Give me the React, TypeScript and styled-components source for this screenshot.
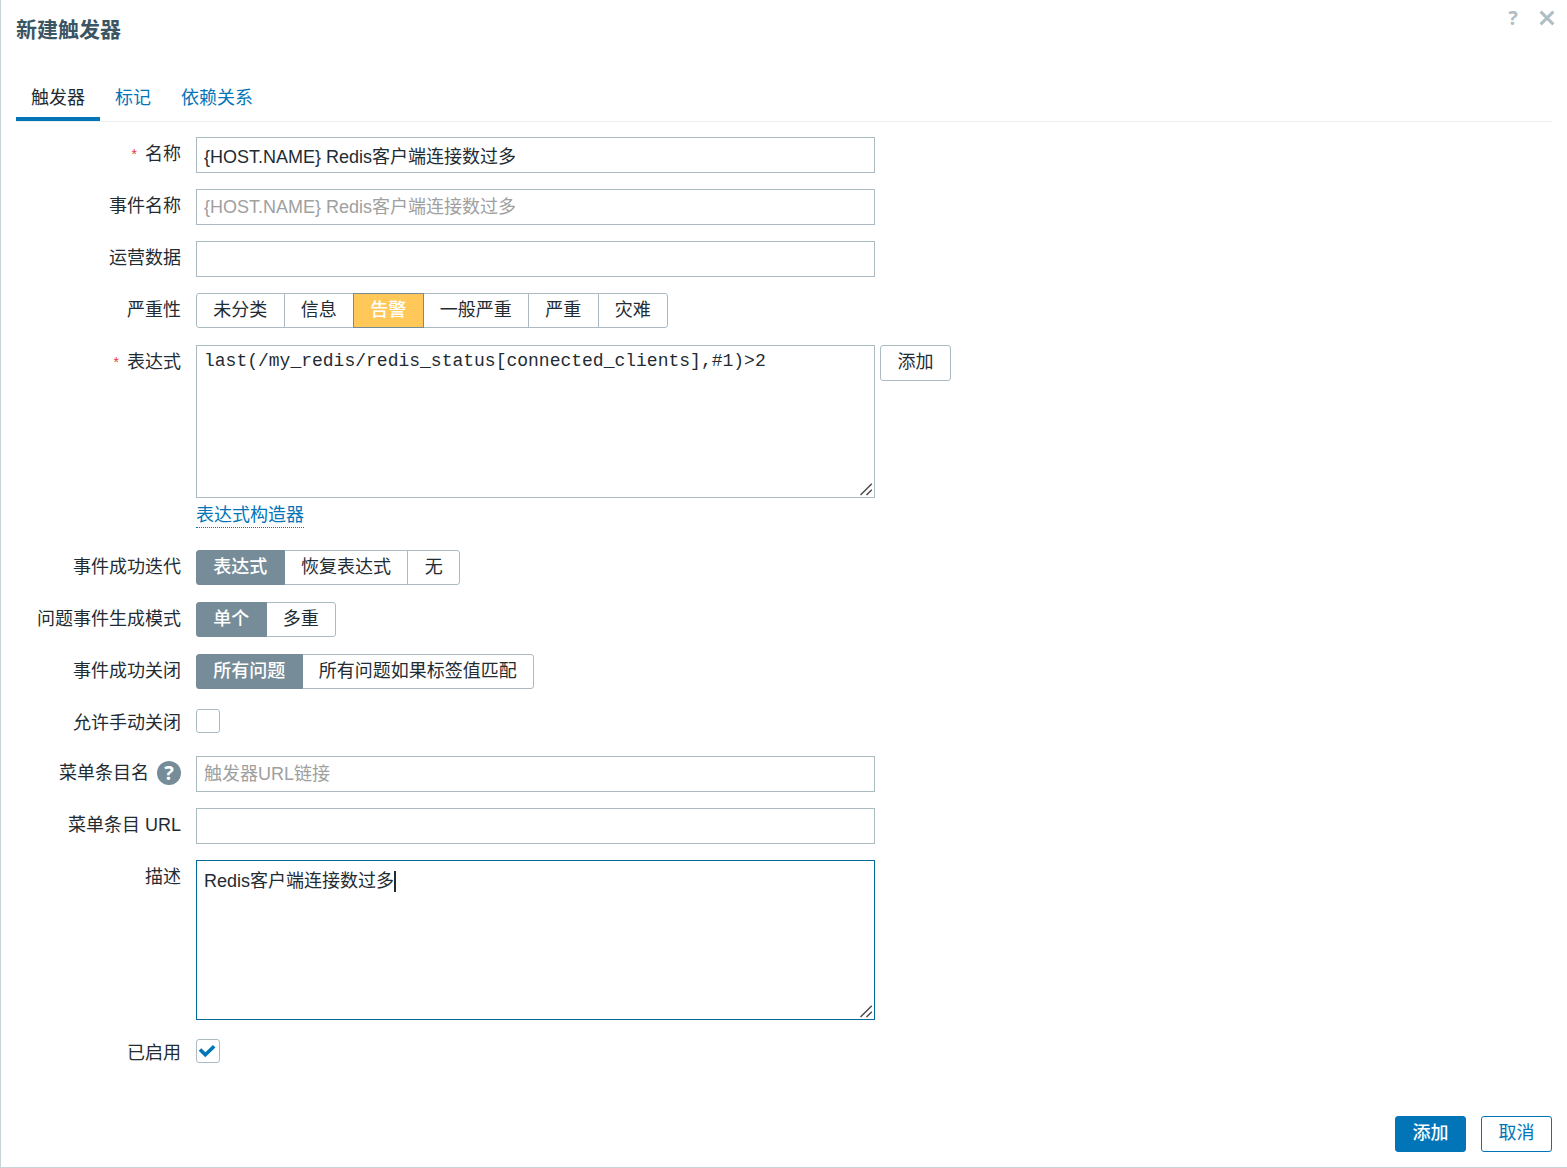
import React, { useLayoutEffect, useRef, useState } from "react";
import styled, { createGlobalStyle } from "styled-components";

const sans = '"Liberation Sans", "Noto Sans CJK SC", sans-serif';
const mono = '"Liberation Mono", "Noto Sans CJK SC", monospace';

const color = {
  text: "#1f2c33",
  heading: "#3c5563",
  link: "#0275b8",
  border: "#acbbc2",
  focus: "#006a9d",
  selected: "#768d99",
  warning: "#ffc859",
  required: "#e33734",
  hint: "#a0a0a0",
};

const GlobalStyle = createGlobalStyle`
  * { box-sizing: border-box; }
  body {
    margin: 0;
    background: #ffffff;
    color: ${color.text};
    font-family: ${sans};
    font-size: 18px;
  }
  button, input, textarea { font-family: inherit; font-size: inherit; color: inherit; margin: 0; }
`;

const Dialog = styled.form`
  display: flex;
  flex-direction: column;
  min-height: 100vh;
  padding: 0 15px 15px;
  border-left: 1px solid #c8d3d7;
  border-bottom: 1px solid #c8d3d7;
`;

const Header = styled.header`
  display: flex;
  justify-content: space-between;
  align-items: flex-start;
  height: 76px;
`;

const Title = styled.h1`
  margin: 14px 0 0;
  font-size: 21px;
  line-height: 32px;
  font-weight: 700;
  color: ${color.heading};
`;

const HeaderTools = styled.div`
  display: flex;
  gap: 12px;
  margin-right: -6px;
  padding-top: 6px;
`;

const IconButton = styled.button`
  display: grid;
  place-items: center;
  width: 22px;
  height: 24px;
  padding: 0;
  border: 0;
  background: none;
  color: #b0bec5;
  font-family: "Noto Sans", sans-serif;
  font-size: 20px;
  line-height: 24px;
  font-weight: 700;
`;

const Tabs = styled.nav`
  display: flex;
  height: 46px;
  border-bottom: 1px solid #ebeef0;
`;

const Tab = styled.a<{ $active?: boolean }>`
  padding: 4px 15px 0;
  line-height: 37px;
  text-decoration: none;
  color: ${(p) => (p.$active ? color.text : color.link)};
  border-bottom: 4px solid ${(p) => (p.$active ? color.link : "transparent")};
`;

const Fields = styled.div`
  display: flex;
  flex-direction: column;
  gap: 16px;
  padding: 15px 0 40px;
`;

const Row = styled.div`
  display: grid;
  grid-template-columns: 165px minmax(0, 1fr);
  column-gap: 15px;
  align-items: start;
`;

const LabelCell = styled.div`
  display: flex;
  justify-content: flex-end;
  align-items: center;
  gap: 8px;
  height: 34px;
  line-height: 34px;
  white-space: nowrap;
`;

const Required = styled.span`
  color: ${color.required};
  font-size: 14px;
`;

const HelpBadge = styled.button`
  display: grid;
  place-items: center;
  width: 24px;
  height: 24px;
  padding: 0;
  border: 0;
  border-radius: 50%;
  background: ${color.selected};
  color: #ffffff;
  font-family: "Noto Sans", sans-serif;
  font-size: 20px;
  line-height: 24px;
  font-weight: 700;
`;

const Control = styled.div`
  display: flex;
  flex-wrap: wrap;
  align-items: flex-start;
  gap: 5px;
  min-height: 34px;
`;

const TextInput = styled.input`
  width: 679px;
  max-width: 100%;
  height: 36px;
  padding: 0 7px;
  border: 1px solid ${color.border};
  border-radius: 0;
  background: #ffffff;
  outline: none;
  &::placeholder { color: ${color.hint}; opacity: 1; }
  &:focus { border-color: ${color.focus}; }
`;

const AreaFrame = styled.div`
  position: relative;
  width: 679px;
  max-width: 100%;
`;

const TextArea = styled.textarea<{ $height: number; $mono?: boolean; $top: number }>`
  display: block;
  width: 100%;
  height: ${(p) => p.$height}px;
  padding: ${(p) => p.$top}px 7px;
  border: 1px solid ${color.border};
  border-radius: 0;
  outline: none;
  resize: vertical;
  line-height: 24px;
  font-family: ${(p) => (p.$mono ? mono : sans)};
  &:focus { border-color: ${color.focus}; }
  &::-webkit-resizer { background: transparent; }
`;

const Grip = styled.svg`
  position: absolute;
  right: 2px;
  bottom: 2px;
  pointer-events: none;
`;

const Caret = styled.span`
  position: absolute;
  top: 11px;
  width: 2px;
  height: 21px;
  background: ${color.text};
  pointer-events: none;
`;

const Button = styled.button<{ $kind?: "primary" | "outline" }>`
  min-width: 71px;
  height: 36px;
  padding: 0 16px 2px;
  line-height: 32px;
  border-radius: 3px;
  border: 1px solid ${(p) => (p.$kind ? color.link : color.border)};
  background: ${(p) => (p.$kind === "primary" ? color.link : "#ffffff")};
  color: ${(p) => (p.$kind === "primary" ? "#ffffff" : p.$kind ? color.link : color.text)};
  font-weight: ${(p) => (p.$kind === "primary" ? 500 : 400)};
`;

const ExpressionBox = styled.div`
  display: flex;
  flex-direction: column;
  align-items: flex-start;
  max-width: 100%;
  padding-bottom: 6px;
`;

const DottedLink = styled.a`
  margin-top: 5px;
  line-height: 24px;
  text-decoration: none;
  color: ${color.link};
  border-bottom: 1px dotted ${color.link};
`;

const SegmentGroup = styled.div<{ $width: number }>`
  display: flex;
  width: ${(p) => p.$width}px;
  height: 35px;
  margin-bottom: 1px;
`;

const Segment = styled.label<{ $fill: string; $edge: string }>`
  position: relative;
  flex: 1 0 auto;
  padding: 0 15px;
  line-height: 32px;
  text-align: center;
  border: 1px solid ${color.border};
  background: #ffffff;
  & + & { margin-left: -1px; }
  &:first-child { border-radius: 3px 0 0 3px; }
  &:last-child { border-radius: 0 3px 3px 0; }
  &:has(input:checked) {
    z-index: 1;
    color: #ffffff;
    font-weight: 500;
    background: ${(p) => p.$fill};
    border-color: ${(p) => p.$edge};
  }
`;

const SegmentInput = styled.input`
  position: absolute;
  inset: 0;
  width: 100%;
  height: 100%;
  opacity: 0;
`;

const CheckWrap = styled.span`
  display: grid;
  width: 24px;
  height: 24px;
  margin-top: 3px;
  & > * { grid-area: 1 / 1; }
  svg { display: none; pointer-events: none; }
  input:checked + svg { display: block; }
`;

const CheckInput = styled.input`
  appearance: none;
  width: 24px;
  height: 24px;
  border: 1px solid ${color.border};
  border-radius: 3px;
  background: #ffffff;
`;

const Footer = styled.footer`
  display: flex;
  justify-content: flex-end;
  gap: 15px;
  margin-top: auto;
`;

type FieldProps = {
  label: string;
  id: string;
  required?: boolean;
  help?: boolean;
  group?: boolean;
  children: React.ReactNode;
};

function Field({ label, id, required, help, group, children }: FieldProps) {
  return (
    <Row>
      <LabelCell>
        {required && <Required>*</Required>}
        {group ? <span id={id}>{label}</span> : <label htmlFor={id}>{label}</label>}
        {help && <HelpBadge type="button">?</HelpBadge>}
      </LabelCell>
      <Control>{children}</Control>
    </Row>
  );
}

type SegmentedProps = {
  name: string;
  options: string[];
  initial: number;
  width: number;
  fill?: string;
};

function Segmented({ name, options, initial, width, fill = color.selected }: SegmentedProps) {
  return (
    <SegmentGroup role="radiogroup" aria-labelledby={name} $width={width}>
      {options.map((option, i) => (
        <Segment key={option} $fill={fill} $edge={color.selected}>
          <SegmentInput type="radio" name={name} defaultChecked={i === initial} />
          {option}
        </Segment>
      ))}
    </SegmentGroup>
  );
}

function Checkbox({ id, checked }: { id: string; checked?: boolean }) {
  return (
    <CheckWrap>
      <CheckInput id={id} type="checkbox" defaultChecked={checked} />
      <svg width="24" height="24" viewBox="0 0 24 24" fill="none" stroke={color.link} strokeWidth="3.6">
        <path d="M4 10.5 9.3 15.7 18.2 7.2" />
      </svg>
    </CheckWrap>
  );
}

function ResizeGrip() {
  return (
    <Grip width="13" height="13" viewBox="0 0 13 13" stroke="#4c4c4c" strokeWidth="1.5" aria-hidden="true">
      <path d="M0.5 12 11.8 0.7M6.5 12 11.8 6.7" />
    </Grip>
  );
}

function DescriptionArea() {
  const area = useRef<HTMLTextAreaElement>(null);
  const [value, setValue] = useState("Redis客户端连接数过多");
  const [caretLeft, setCaretLeft] = useState<number | null>(null);

  // The caret is drawn after the last character until the text is edited.
  useLayoutEffect(() => {
    const node = area.current;
    const context = document.createElement("canvas").getContext("2d");
    if (!node || !context) return;
    node.focus();
    node.setSelectionRange(node.value.length, node.value.length);
    context.font = `18px ${sans}`;
    setCaretLeft(8 + Math.floor(context.measureText(node.value).width));
  }, []);

  return (
    <AreaFrame>
      <TextArea
        ref={area}
        id="description"
        $height={160}
        $top={8}
        spellCheck={false}
        value={value}
        onChange={(e) => {
          setValue(e.target.value);
          setCaretLeft(null);
        }}
        onBlur={() => setCaretLeft(null)}
      />
      {caretLeft !== null && <Caret style={{ left: caretLeft }} />}
      <ResizeGrip />
    </AreaFrame>
  );
}

export default function App() {
  const [name, setName] = useState("{HOST.NAME} Redis客户端连接数过多");

  return (
    <>
      <GlobalStyle />
      <Dialog onSubmit={(e) => e.preventDefault()}>
        <Header>
          <Title>新建触发器</Title>
          <HeaderTools>
            <IconButton type="button">?</IconButton>
            <IconButton type="button" aria-label="关闭">
              <svg width="16" height="16" viewBox="0 0 16 16" stroke="currentColor" strokeWidth="3">
                <path d="M1.6 1.6 14.4 14.4M14.4 1.6 1.6 14.4" />
              </svg>
            </IconButton>
          </HeaderTools>
        </Header>

        <Tabs>
          <Tab href="#trigger" $active>触发器</Tab>
          <Tab href="#tags">标记</Tab>
          <Tab href="#dependencies">依赖关系</Tab>
        </Tabs>

        <Fields>
          <Field label="名称" id="name" required>
            <TextInput id="name" value={name} onChange={(e) => setName(e.target.value)} />
          </Field>
          <Field label="事件名称" id="event-name">
            <TextInput id="event-name" placeholder={name} />
          </Field>
          <Field label="运营数据" id="opdata">
            <TextInput id="opdata" />
          </Field>
          <Field label="严重性" id="severity" group>
            <Segmented
              name="severity"
              options={["未分类", "信息", "告警", "一般严重", "严重", "灾难"]}
              initial={2}
              width={472}
              fill={color.warning}
            />
          </Field>
          <Field label="表达式" id="expression" required>
            <ExpressionBox>
              <AreaFrame>
                <TextArea
                  id="expression"
                  $height={153}
                  $top={3}
                  $mono
                  spellCheck={false}
                  defaultValue="last(/my_redis/redis_status[connected_clients],#1)>2"
                />
                <ResizeGrip />
              </AreaFrame>
              <DottedLink href="#constructor">表达式构造器</DottedLink>
            </ExpressionBox>
            <Button type="button">添加</Button>
          </Field>
          <Field label="事件成功迭代" id="recovery" group>
            <Segmented name="recovery" options={["表达式", "恢复表达式", "无"]} initial={0} width={264} />
          </Field>
          <Field label="问题事件生成模式" id="mode" group>
            <Segmented name="mode" options={["单个", "多重"]} initial={0} width={140} />
          </Field>
          <Field label="事件成功关闭" id="closes" group>
            <Segmented name="closes" options={["所有问题", "所有问题如果标签值匹配"]} initial={0} width={338} />
          </Field>
          <Field label="允许手动关闭" id="manual-close">
            <Checkbox id="manual-close" />
          </Field>
          <Field label="菜单条目名" id="url-name" help>
            <TextInput id="url-name" placeholder="触发器URL链接" />
          </Field>
          <Field label="菜单条目 URL" id="url">
            <TextInput id="url" />
          </Field>
          <Field label="描述" id="description">
            <DescriptionArea />
          </Field>
          <Field label="已启用" id="enabled">
            <Checkbox id="enabled" checked />
          </Field>
        </Fields>

        <Footer>
          <Button type="submit" $kind="primary">添加</Button>
          <Button type="button" $kind="outline">取消</Button>
        </Footer>
      </Dialog>
    </>
  );
}
